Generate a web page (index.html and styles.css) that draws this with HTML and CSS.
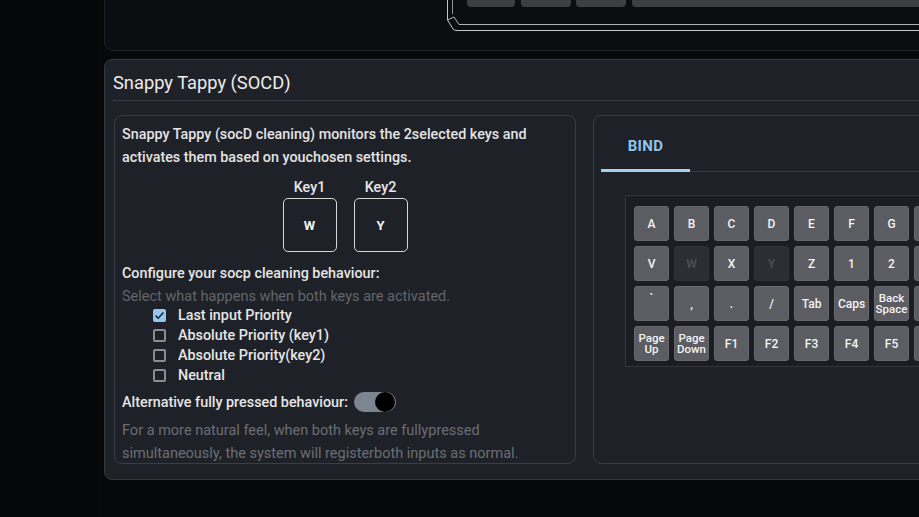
FILE: index.html
```html
<!DOCTYPE html>
<html lang="en">
<head>
<meta charset="utf-8">
<title>Snappy Tappy (SOCD)</title>
<link rel="stylesheet" href="styles.css">
</head>
<body>
<div class="page">
  <div class="strip"></div>
  <main class="main">
    <section class="top-card">
      <svg class="kb-art" width="480" height="34" viewBox="0 0 480 34" aria-hidden="true">
        <rect x="20" y="-6" width="48" height="13" rx="4" fill="#3d3e42"/>
        <rect x="74" y="-6" width="50" height="13" rx="4" fill="#3d3e42"/>
        <rect x="129" y="-6" width="50" height="13" rx="4" fill="#3d3e42"/>
        <rect x="185" y="-6" width="300" height="13" rx="4" fill="#3d3e42"/>
        <path d="M0.5 0 V20 L6 29 Q7 30.5 10 30.5 H480" fill="none" stroke="#c4c6ca" stroke-width="1"/>
        <path d="M5.5 0 V14" fill="none" stroke="#8d9094" stroke-width="1"/>
        <path d="M0.5 20 L7 17 L12 24.5 H480" fill="none" stroke="#aeb1b5" stroke-width="1"/>
      </svg>
    </section>

    <section class="card">
      <h2 class="card-title">Snappy Tappy (SOCD)</h2>
      <div class="card-body">
        <div class="panel settings">
          <p class="intro">Snappy Tappy (socD cleaning) monitors the 2selected keys and<br>activates them based on youchosen settings.</p>
          <div class="key-pair">
            <div class="key-col">
              <span class="key-label">Key1</span>
              <div class="key-box">W</div>
            </div>
            <div class="key-col">
              <span class="key-label">Key2</span>
              <div class="key-box">Y</div>
            </div>
          </div>
          <p class="heading">Configure your socp cleaning behaviour:</p>
          <p class="hint">Select what happens when both keys are activated.</p>
          <ul class="options">
            <li class="option"><span class="check checked"><svg width="13" height="13" viewBox="0 0 13 13"><path d="M2.6 6.6 L5.2 9.2 L10.4 3.6" fill="none" stroke="#1f2128" stroke-width="1.5"/></svg></span>Last input Priority</li>
            <li class="option"><span class="check"></span>Absolute Priority (key1)</li>
            <li class="option"><span class="check"></span>Absolute Priority(key2)</li>
            <li class="option"><span class="check"></span>Neutral</li>
          </ul>
          <div class="toggle-row">
            <span class="heading-inline">Alternative fully pressed behaviour:</span>
            <span class="toggle"><span class="knob"></span></span>
          </div>
          <p class="desc">For a more natural feel, when both keys are fullypressed<br>simultaneously, the system will registerboth inputs as normal.</p>
        </div>

        <div class="panel bind">
          <div class="tabs">
            <div class="tab active">BIND</div>
          </div>
          <div class="keyboard">
            <div class="kgrid">
              <div class="k">A</div><div class="k">B</div><div class="k">C</div><div class="k">D</div><div class="k">E</div><div class="k">F</div><div class="k">G</div><div class="k">H</div>
              <div class="k">V</div><div class="k off">W</div><div class="k">X</div><div class="k off">Y</div><div class="k">Z</div><div class="k">1</div><div class="k">2</div><div class="k">3</div>
              <div class="k tick">`</div><div class="k">,</div><div class="k">.</div><div class="k">/</div><div class="k">Tab</div><div class="k">Caps</div><div class="k two">Back<br>Space</div><div class="k">Shift</div>
              <div class="k two">Page<br>Up</div><div class="k two">Page<br>Down</div><div class="k">F1</div><div class="k">F2</div><div class="k">F3</div><div class="k">F4</div><div class="k">F5</div><div class="k">F6</div>
            </div>
          </div>
        </div>
      </div>
    </section>
  </main>
</div>
</body>
</html>
```

FILE: styles.css
```css
* { box-sizing: border-box; }

html, body {
  margin: 0;
  width: 919px;
  height: 517px;
  overflow: hidden;
  background: #07080a;
  font-family: Roboto, "Liberation Sans", sans-serif;
  color: #e6e6e6;
}

.page {
  display: flex;
  height: 517px;
}

.strip {
  flex: 0 0 97px;
  background: #050607;
}

.main {
  flex: 0 0 auto;
  padding-left: 7px;
  width: 900px;
}

.top-card {
  height: 51px;
  background: #0c0d11;
  border: 1px solid #202227;
  border-top: none;
  border-radius: 0 0 9px 9px;
  width: 880px;
  overflow: hidden;
}

.kb-art {
  display: block;
  margin-left: 342px;
}

.card {
  margin-top: 8px;
  width: 880px;
  background: #1f2128;
  border: 1px solid #35383e;
  border-radius: 8px;
}

.card-title {
  margin: 0 8px;
  padding: 11px 0 5px;
  font-size: 18.3px;
  line-height: 24px;
  font-weight: 400;
  color: #ececec;
  border-bottom: 1px solid #393c43;
}

.card-body {
  display: flex;
  gap: 17px;
  padding: 14px 0 15px 9px;
}

.panel {
  border: 1px solid #3a3d44;
  border-radius: 8px;
  height: 349px;
}

.settings {
  flex: 0 0 462px;
  padding: 7px 7px 0;
}

.intro {
  margin: 0;
  font-size: 14.35px;
  line-height: 23px;
  font-weight: 500;
  color: #e4e4e4;
}

.key-pair {
  display: flex;
  justify-content: center;
  gap: 17px;
  margin-top: 10px;
}

.key-col {
  display: flex;
  flex-direction: column;
  align-items: center;
}

.key-label {
  font-size: 14.35px;
  line-height: 18px;
  font-weight: 500;
}

.key-box {
  margin-top: 1px;
  width: 54px;
  height: 54px;
  border: 1px solid #d8d8d8;
  border-radius: 5px;
  display: flex;
  align-items: center;
  justify-content: center;
  font-size: 13px;
  font-weight: 700;
  color: #f2f2f2;
}

.heading {
  margin: 10px 0 0;
  font-size: 14.35px;
  line-height: 23px;
  font-weight: 500;
}

.hint {
  margin: 0;
  font-size: 14.5px;
  line-height: 23px;
  color: #62656b;
}

.options {
  list-style: none;
  margin: -3px 0 0;
  padding: 0 0 0 31px;
}

.option {
  display: flex;
  align-items: center;
  gap: 12px;
  height: 20px;
  font-size: 14.35px;
  font-weight: 500;
  color: #e6e6e6;
}

.check {
  width: 13px;
  height: 13px;
  border: 2px solid #8b8d91;
  border-radius: 2px;
  flex: 0 0 13px;
}

.check.checked {
  border: none;
  background: #90c8f2;
}

.check svg { display: block; }

.toggle-row {
  display: flex;
  align-items: center;
  gap: 6px;
  margin-top: 5px;
  height: 24px;
}

.heading-inline {
  font-size: 14.35px;
  font-weight: 500;
}

.toggle {
  width: 42px;
  height: 20px;
  border-radius: 10px;
  background: #7c8690;
  display: flex;
  justify-content: flex-end;
  align-items: center;
  padding-right: 1px;
}

.knob {
  width: 20px;
  height: 20px;
  border-radius: 50%;
  background: #000;
}

.desc {
  margin: 5px 0 0;
  font-size: 14.5px;
  line-height: 23px;
  color: #6b6e74;
}

.bind {
  flex: 1 1 auto;
}

.tabs {
  margin: 0 7px;
  border-bottom: 1px solid #3a3d44;
  display: flex;
}

.tab {
  width: 89px;
  text-align: center;
  padding: 19px 0 12px;
  line-height: 22px;
  font-size: 15px;
  font-weight: 700;
  letter-spacing: 0.3px;
  color: #90c4ec;
  border-bottom: 3px solid #a6d0ef;
  margin-bottom: -1px;
}

.keyboard {
  margin: 23px 0 0 31px;
  border: 1px solid #34363c;
  border-right: none;
  background: #1b1d22;
  padding: 10px 0 5px 8px;
  overflow: hidden;
}

.kgrid {
  display: grid;
  grid-template-columns: repeat(8, 35px);
  grid-auto-rows: 35px;
  gap: 5px;
}

.k {
  background: #5b5d62;
  border: 1px solid #66686d;
  border-radius: 3px;
  display: flex;
  align-items: center;
  justify-content: center;
  text-align: center;
  font-size: 12px;
  font-weight: 500;
  color: #f4f4f4;
}

.k.off {
  background: #2c2e33;
  border-color: #303237;
  color: #4e5055;
}

.k.two {
  font-size: 11.5px;
  line-height: 11px;
}

.k.tick {
  align-items: flex-start;
  padding-top: 5px;
}
```
